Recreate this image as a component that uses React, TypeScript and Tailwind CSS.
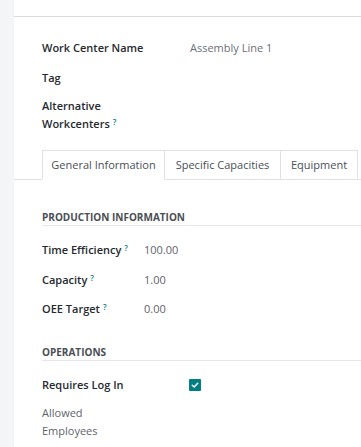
import React from "react";

const font = { fontFamily: '"Open Sans", "Liberation Sans", sans-serif' };

const Help = () => (
  <sup className="ml-[3px] text-[8px] font-semibold text-[#017e84] relative -top-[3px]">?</sup>
);

const App: React.FC = () => {
  return (
    <div className="w-[361px] h-[447px] overflow-hidden flex bg-[#f6f6f8]" style={font}>
      {/* left gutter */}
      <div className="w-[14px] shrink-0 bg-[#f4f5f7]" />

      {/* sheet */}
      <div className="flex-1 min-w-0 bg-white flex flex-col">
        <div className="h-[17px] border-b border-[#d8dadd]" />

        {/* top fields */}
        <div className="pl-[28px] pt-[16px] text-[11px]">
          <div className="flex h-[30px] items-center">
            <div className="w-[148px] font-semibold text-[#262a2f]">Work Center Name</div>
            <div className="text-[#6b6f76]">Assembly Line 1</div>
          </div>
          <div className="flex h-[30px] items-center">
            <div className="w-[148px] font-semibold text-[#262a2f]">Tag</div>
          </div>
          <div className="flex pt-[4px] h-[40px]">
            <div className="w-[148px] font-semibold text-[#262a2f] leading-[18px]">
              Alternative
              <br />
              Workcenters
              <Help />
            </div>
          </div>
        </div>

        {/* tabs */}
        <div className="mt-[17px] flex border-b border-[#dee2e6] pl-[28px] h-[30px] whitespace-nowrap text-[11px] text-[#495057]">
          <div className="shrink-0 w-[123px] flex items-center justify-center border border-[#dee2e6] border-b-white bg-white -mb-px">
            General Information
          </div>
          <div className="shrink-0 w-[116px] flex items-center justify-center border-t border-r border-[#dee2e6]">
            Specific Capacities
          </div>
          <div className="shrink-0 w-[77px] flex items-center justify-center border-t border-r border-[#dee2e6]">
            Equipment
          </div>
        </div>

        {/* tab content */}
        <div className="pl-[28px] text-[11px]">
          <div className="mt-[30px] border-b border-[#e4e6e9] pb-[1px] text-[10px] leading-[14px] font-bold uppercase text-[#4a4e54]">
            Production Information
          </div>
          <div className="mt-[9px]">
            <div className="flex h-[30px] items-center">
              <div className="w-[102px] font-semibold text-[#262a2f]">
                Time Efficiency
                <Help />
              </div>
              <div className="text-[#5f636a]">100.00</div>
            </div>
            <div className="flex h-[30px] items-center">
              <div className="w-[102px] font-semibold text-[#262a2f]">
                Capacity
                <Help />
              </div>
              <div className="text-[#5f636a]">1.00</div>
            </div>
            <div className="flex h-[29px] items-center">
              <div className="w-[102px] font-semibold text-[#262a2f]">
                OEE Target
                <Help />
              </div>
              <div className="text-[#5f636a]">0.00</div>
            </div>
          </div>

          <div className="mt-[21px] border-b border-[#e4e6e9] pb-[1px] text-[10px] leading-[14px] font-bold uppercase text-[#4a4e54]">
            Operations
          </div>
          <div className="mt-[9px]">
            <div className="flex h-[30px] items-center">
              <div className="w-[147px] font-semibold text-[#262a2f]">Requires Log In</div>
              <div className="w-[12px] h-[12px] bg-[#017e84] rounded-[1px] flex items-center justify-center">
                <svg width="8" height="8" viewBox="0 0 8 8" fill="none">
                  <path d="M1.3 4.2 L3.2 6 L6.7 2.2" stroke="white" strokeWidth="1.5" strokeLinecap="round" strokeLinejoin="round" />
                </svg>
              </div>
            </div>
            <div className="pt-[4px] leading-[18px] text-[#5f636a]">
              Allowed
              <br />
              Employees
            </div>
          </div>
        </div>
      </div>
    </div>
  );
};

export default App;
